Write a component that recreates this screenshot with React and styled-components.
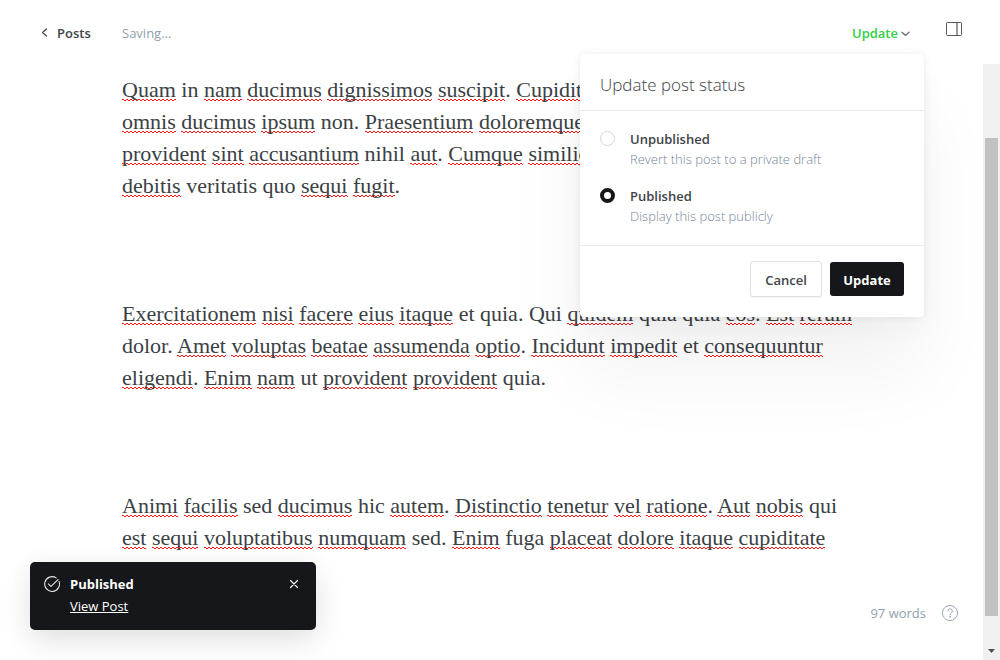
import React from "react";
import styled, { createGlobalStyle } from "styled-components";

const Global = createGlobalStyle`
  * { box-sizing: border-box; }
  html, body { margin: 0; background: #fff; }
  body { font-family: "Open Sans", "Noto Sans", sans-serif; color: #3e4449; overflow: hidden; }
  button { font-family: inherit; cursor: pointer; }
`;

const Screen = styled.div`
  position: relative;
  height: 100vh;
  display: flex;
  flex-direction: column;
  overflow: hidden;
`;

const Header = styled.header`
  display: flex;
  align-items: center;
  height: 64px;
  flex: none;
  padding: 0 37px 0 40px;
`;

const BackLink = styled.a`
  display: flex;
  align-items: center;
  gap: 8px;
  width: 82px;
  padding-top: 1px;
  color: #3e4449;
  font-size: 13px;
  font-weight: 600;
  line-height: 20px;
  text-decoration: none;
`;

const SaveState = styled.span`
  flex: 1;
  padding-top: 1px;
  color: #8f9fac;
  font-size: 13px;
  line-height: 20px;
`;

const StatusButton = styled.button`
  display: flex;
  align-items: center;
  gap: 3px;
  margin-right: 35px;
  padding: 1px 0 0;
  border: 0;
  background: none;
  color: #30cf43;
  font-size: 13px;
  font-weight: 600;
  line-height: 20px;
  svg { margin-top: 3px; }
`;

const IconButton = styled.button`
  display: flex;
  padding: 0;
  border: 0;
  background: none;
  color: inherit;
`;

const PanelButton = styled(IconButton)`
  margin-bottom: 6px;
`;

const Body = styled.div`
  flex: 1;
  min-height: 0;
  display: flex;
`;

const Editor = styled.main`
  flex: 1;
  min-width: 0;
  padding: 10px 120px 0 122px;
  overflow: hidden;
  font-family: Georgia, "Liberation Serif", serif;
  font-size: 22px;
  line-height: 32px;
  white-space: nowrap;
  color: #3a4145;
`;

const Paragraph = styled.p`
  margin: 0 0 96px;
`;

const Misspelt = styled.span`
  background-image:
    linear-gradient(90deg, #f11 50%, transparent 50%),
    linear-gradient(90deg, transparent 50%, #f11 50%);
  background-size: 4px 1px;
  background-repeat: repeat-x;
  background-position: 0 calc(100% - 2px), 0 calc(100% - 1px);
`;

const Scrollbar = styled.div`
  flex: none;
  width: 17px;
  display: flex;
  flex-direction: column;
  align-items: center;
  background: #f0f0f0;
  padding-top: 74px;
`;

const Thumb = styled.div`
  width: 13px;
  height: calc(100% - 44px);
  background: #c1c1c1;
`;

const ScrollArrow = styled.svg`
  margin: auto 0 7px;
`;

const Popover = styled.form`
  position: absolute;
  top: 54px;
  right: 76px;
  width: 344px;
  border-radius: 4px;
  background: #fff;
  box-shadow: 0 0 7px rgba(0, 0, 0, 0.08), 0 12px 24px rgba(0, 0, 0, 0.03), 0 57px 80px rgba(0, 0, 0, 0.05);
`;

const PopoverTitle = styled.h2`
  margin: 0;
  padding: 19px 20px 13px;
  border-bottom: 1px solid #e8eaec;
  font-size: 17px;
  font-weight: 300;
  line-height: 24px;
`;

const Options = styled.div`
  display: flex;
  flex-direction: column;
  gap: 17px;
  padding: 18px 20px 19px;
`;

const Option = styled.label`
  display: flex;
  align-items: flex-start;
  gap: 15px;
`;

const Radio = styled.input`
  appearance: none;
  flex: none;
  width: 15px;
  height: 15px;
  margin: 2px 0 0;
  border: 1px solid #cfd7dd;
  border-radius: 50%;
  background: #fff;
  &:checked { border: 4px solid #15171a; }
`;

const OptionText = styled.span`
  display: flex;
  flex-direction: column;
  font-size: 13px;
  line-height: 20px;
`;

const OptionName = styled.span`
  font-weight: 600;
`;

const OptionHint = styled.span`
  font-weight: 300;
  color: #74869a;
`;

const Actions = styled.footer`
  display: flex;
  justify-content: flex-end;
  align-items: center;
  gap: 8px;
  padding: 15px 20px 20px;
  border-top: 1px solid #e8eaec;
`;

const ActionButton = styled.button`
  height: ${(p) => (p.$primary ? 34 : 36)}px;
  width: ${(p) => (p.$primary ? 74 : 72)}px;
  padding: 2px 0 0;
  border: ${(p) => (p.$primary ? "0" : "1px solid #dde1e5")};
  border-radius: 3px;
  background: ${(p) => (p.$primary ? "#15171a" : "#fff")};
  color: ${(p) => (p.$primary ? "#fff" : "#3e4449")};
  font-size: 13px;
  font-weight: ${(p) => (p.$primary ? 700 : 600)};
  box-shadow: ${(p) => (p.$primary ? "none" : "0 1px 1px rgba(0, 0, 0, 0.05)")};
`;

const Toast = styled.aside`
  position: absolute;
  left: 30px;
  bottom: 30px;
  width: 286px;
  display: flex;
  align-items: flex-start;
  gap: 10px;
  padding: 11px 17px 13px 14px;
  border-radius: 5px;
  background: #15171a;
  color: #fff;
  font-size: 13px;
  box-shadow: 0 12px 30px rgba(0, 0, 0, 0.1), 0 0 30px rgba(0, 0, 0, 0.03);
  > svg { margin-top: 3px; }
`;

const ToastText = styled.div`
  flex: 1;
  display: flex;
  flex-direction: column;
  align-items: flex-start;
  line-height: 22px;
`;

const ToastLink = styled.a`
  color: #fff;
`;

const ToastClose = styled(IconButton)`
  margin-top: 6px;
`;

const EditorInfo = styled.div`
  position: absolute;
  right: 41px;
  bottom: 37px;
  display: flex;
  align-items: center;
  gap: 15px;
  color: #8f9fac;
  font-size: 13px;
  line-height: 20px;
`;

const paragraphs = [
  [
    "*Quam* in *nam* *ducimus* *dignissimos* *suscipit*. *Cupiditate*",
    "*omnis* *ducimus* *ipsum* non. *Praesentium* *doloremque*",
    "*provident* *sint* *accusantium* nihil *aut*. *Cumque* *similique*",
    "*debitis* veritatis quo *sequi* *fugit*.",
  ],
  [
    "*Exercitationem* *nisi* *facere* *eius* *itaque* et quia. Qui *quidem* quia quia *eos*. *Est* *rerum*",
    "dolor. *Amet* *voluptas* *beatae* *assumenda* *optio*. *Incidunt* *impedit* et *consequuntur*",
    "*eligendi*. *Enim* *nam* ut *provident* *provident* quia.",
  ],
  [
    "*Animi* *facilis* sed *ducimus* hic *autem*. *Distinctio* *tenetur* *vel* *ratione*. *Aut* *nobis* qui",
    "*est* *sequi* *voluptatibus* *numquam* sed. *Enim* fuga *placeat* *dolore* *itaque* *cupiditate*",
  ],
];

function Line({ text }) {
  return text
    .split("*")
    .map((part, i) => (i % 2 ? <Misspelt key={i}>{part}</Misspelt> : part));
}

export default function App() {
  return (
    <Screen>
      <Global />
      <Header>
        <BackLink href="#posts">
          <svg width="9" height="10" viewBox="0 0 9 10" fill="none" stroke="currentColor" strokeWidth="1.2" strokeLinecap="round" strokeLinejoin="round">
            <path d="M6.500 1 2.500 4.500 6.500 8" />
          </svg>
          Posts
        </BackLink>
        <SaveState>Saving...</SaveState>
        <StatusButton type="button">
          Update
          <svg width="9" height="6" viewBox="0 0 9 6" fill="none" stroke="#6f777f" strokeWidth="1.4" strokeLinecap="round" strokeLinejoin="round">
            <path d="M1 1.2 4.5 4.6 8 1.2" />
          </svg>
        </StatusButton>
        <PanelButton type="button" aria-label="Settings">
          <svg width="18" height="16" viewBox="0 0 18 16" fill="none" stroke="#54595e">
            <rect x="1.5" y="1.5" width="15" height="13" rx="1" />
            <path d="M12 1.5v13" strokeWidth="1.2" />
          </svg>
        </PanelButton>
      </Header>
      <Body>
        <Editor>
          {paragraphs.map((lines, i) => (
            <Paragraph key={i}>
              {lines.map((text) => (
                <React.Fragment key={text}>
                  <Line text={text} />
                  <br />
                </React.Fragment>
              ))}
            </Paragraph>
          ))}
        </Editor>
        <Scrollbar>
          <Thumb />
          <ScrollArrow width="7" height="4" viewBox="0 0 7 4">
            <path d="M0 0h7L3.500 4z" fill="#505050" />
          </ScrollArrow>
        </Scrollbar>
      </Body>
      <EditorInfo>
        97 words
        <IconButton type="button" aria-label="Help">
          <svg width="18" height="18" viewBox="0 0 18 18" fill="none" stroke="#9aa8b6" strokeLinecap="round" strokeLinejoin="round">
            <circle cx="9" cy="9" r="7.600" />
            <path d="M6.700 7.200a2.300 2.300 0 1 1 3.400 2c-.7.400-1.100.7-1.100 1.400v.3" />
            <circle cx="9" cy="12.900" r=".3" />
          </svg>
        </IconButton>
      </EditorInfo>
      <Popover onSubmit={(e) => e.preventDefault()}>
        <PopoverTitle>Update post status</PopoverTitle>
        <Options>
          <Option>
            <Radio type="radio" name="status" value="draft" />
            <OptionText>
              <OptionName>Unpublished</OptionName>
              <OptionHint>Revert this post to a private draft</OptionHint>
            </OptionText>
          </Option>
          <Option>
            <Radio type="radio" name="status" value="published" defaultChecked />
            <OptionText>
              <OptionName>Published</OptionName>
              <OptionHint>Display this post publicly</OptionHint>
            </OptionText>
          </Option>
        </Options>
        <Actions>
          <ActionButton type="button">Cancel</ActionButton>
          <ActionButton type="submit" $primary>Update</ActionButton>
        </Actions>
      </Popover>
      <Toast>
        <svg width="16" height="16" viewBox="0 0 16 16" fill="none" stroke="#e3e4e5" strokeWidth="1.1" strokeLinecap="round" strokeLinejoin="round">
          <path d="M15 5.400A7.400 7.400 0 1 1 12.200 1.900" />
          <path d="M4.300 7.800 7 10.400 14 3.600" />
        </svg>
        <ToastText>
          <strong>Published</strong>
          <ToastLink href="#view">View Post</ToastLink>
        </ToastText>
        <ToastClose type="button" aria-label="Close">
          <svg width="10" height="10" viewBox="0 0 10 10" stroke="#fff" strokeWidth="1.200" strokeLinecap="round">
            <path d="M1.500 1.500l7 7M8.500 1.500l-7 7" />
          </svg>
        </ToastClose>
      </Toast>
    </Screen>
  );
}
